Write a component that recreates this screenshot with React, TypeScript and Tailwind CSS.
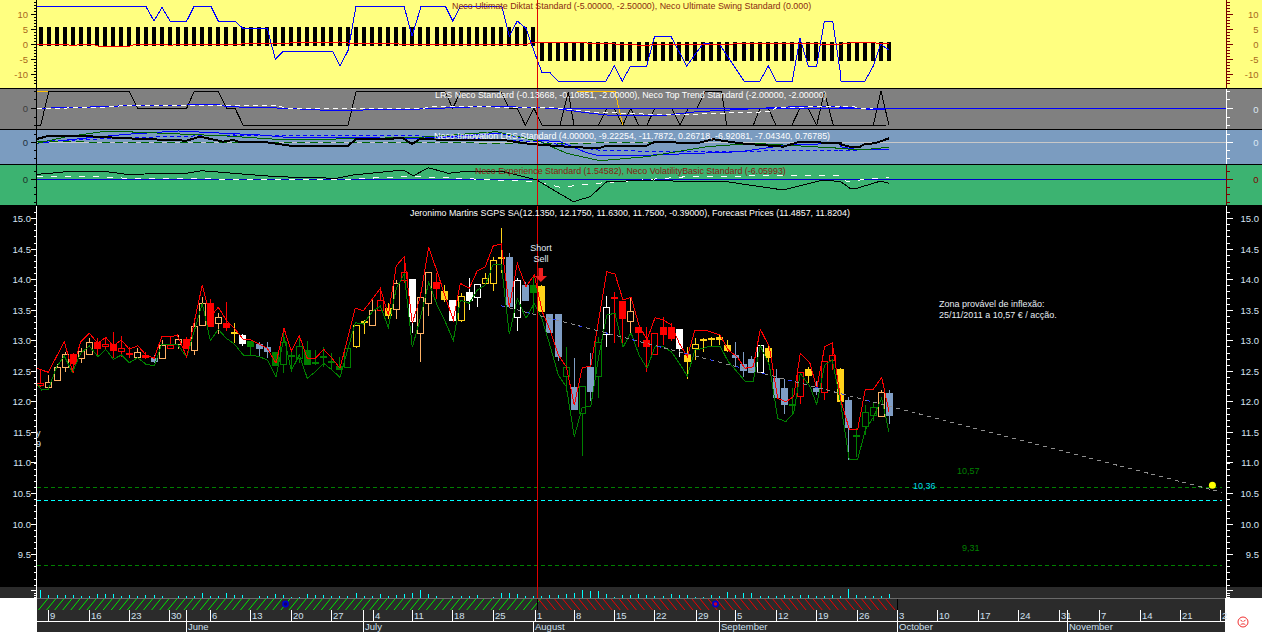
import React from "react";

const SP = 8.08;
const X0 = 40.4;
const cx = (i: number) => X0 + SP * i;

type C = [string, string, number, number, number, number];
const COL: Record<string, string> = { r: "#ff0000", o: "#ffb266", y: "#ffd21a", w: "#ffffff", g: "#008000", b: "#7f9dc4" };

// kind: upper-case letter = filled; lower = hollow. body and wick given in screen y
const raw4: [string, number, number, number, number][] = [
  ["r", 490, 497, 450, 500], ["o", 487, 503, 465, 510], ["o", 442, 482, 432, 482], ["o", 403, 442, 395, 455],
  ["R", 403, 431, 400, 458], ["o", 394, 416, 385, 428], ["o", 367, 404, 355, 404], ["R", 366, 386, 355, 405],
  ["r", 373, 380, 352, 390], ["R", 372, 393, 336, 415], ["r", 385, 394, 348, 412], ["r", 403, 404, 382, 414],
  ["o", 397, 412, 385, 412], ["R", 405, 413, 396, 416], ["B", 415, 426, 405, 428], ["o", 375, 416, 360, 416],
  ["r", 375, 386, 352, 386], ["o", 358, 374, 345, 388], ["R", 358, 386, 350, 388], ["o", 320, 392, 305, 405],
  ["o", 250, 317, 232, 317], ["R", 250, 321, 238, 321], ["o", 292, 310, 280, 342], ["R", 310, 323, 247, 332],
  ["y", 340, 341, 310, 368], ["W", 345, 372, 342, 378], ["G", 363, 380, 363, 405], ["B", 372, 387, 365, 410],
  ["B", 382, 396, 367, 415], ["G", 397, 437, 397, 437],
];
const raw5: [string, number, number, number, number][] = [
  ["g", 366, 433, 325, 460], ["g", 407, 410, 390, 455], ["g", 380, 415, 350, 430], ["G", 390, 435, 363, 435],
  ["g", 428, 429, 390, 435], ["g", 411, 412, 380, 440], ["g", 425, 426, 400, 448], ["G", 438, 450, 410, 450],
  ["g", 385, 443, 385, 443], ["y", 316, 380, 316, 383], ["y", 307, 308, 300, 342], ["o", 272, 316, 238, 316],
  ["r", 241, 270, 205, 270], ["Y", 265, 288, 250, 296], ["o", 190, 268, 180, 296], ["r", 157, 180, 110, 190],
  ["W", 177, 305, 177, 338], ["o", 232, 340, 232, 425], ["o", 157, 250, 157, 288], ["R", 187, 207, 160, 238],
  ["Y", 213, 240, 195, 245], ["W", 240, 303, 240, 303], ["y", 230, 300, 220, 305], ["W", 216, 243, 175, 270],
  ["w", 193, 233, 193, 260], ["y", 175, 191, 160, 191], ["y", 121, 190, 112, 212], ["y", 114, 115, 25, 160],
  ["B", 111, 260, 100, 260], ["w", 180, 293, 175, 332], ["B", 195, 243, 185, 243], ["G", 195, 219, 165, 280],
];
const raw6: [string, number, number, number, number][] = [
  ["Y", 138, 215, 135, 215], ["B", 222, 278, 222, 278], ["B", 222, 350, 222, 362], ["g", 382, 408, 322, 455],
  ["B", 440, 510, 355, 510], ["g", 438, 520, 438, 648], ["B", 382, 455, 340, 482], ["g", 307, 408, 290, 473],
  ["w", 203, 284, 168, 320], ["r", 175, 176, 155, 310], ["R", 184, 238, 184, 310], ["o", 213, 245, 170, 280],
  ["R", 262, 278, 262, 322], ["R", 300, 320, 260, 395], ["r", 280, 344, 280, 344], ["R", 262, 285, 232, 315],
  ["R", 262, 296, 250, 303], ["W", 267, 326, 267, 350], ["Y", 345, 365, 320, 418], ["y", 313, 326, 295, 360],
  ["y", 301, 305, 295, 335],
];
const raw7: [string, number, number, number, number][] = [
  ["y", 118, 122, 112, 138], ["Y", 110, 120, 105, 135], ["Y", 135, 152, 120, 155], ["B", 165, 173, 125, 200],
  ["B", 192, 212, 157, 230], ["B", 178, 218, 168, 218], ["w", 135, 218, 135, 218], ["Y", 145, 173, 135, 190],
  ["B", 233, 295, 208, 295], ["B", 265, 315, 238, 342], ["g", 314, 315, 265, 345], ["r", 218, 290, 218, 312],
  ["Y", 207, 228, 200, 250], ["B", 263, 275, 243, 285], ["r", 185, 277, 185, 300], ["r", 167, 180, 130, 210],
  ["Y", 207, 305, 205, 305], ["B", 300, 385, 290, 480], ["g", 408, 409, 385, 470], ["g", 338, 380, 315, 405],
  ["g", 322, 347, 305, 362], ["o", 278, 350, 270, 350], ["B", 280, 347, 270, 372],
];
const candles: C[] = [
  ...raw4.map((r) => [r[0], "", 220 + r[1] / 3, 220 + r[2] / 3, 220 + r[3] / 3, 220 + r[4] / 3] as C),
  ...raw5.map((r) => [r[0], "", 220 + r[1] / 3, 220 + r[2] / 3, 220 + r[3] / 3, 220 + r[4] / 3] as C),
  ...raw6.map((r) => [r[0], "", 240 + r[1] / 3, 240 + r[2] / 3, 240 + r[3] / 3, 240 + r[4] / 3] as C),
  ...raw7.map((r) => [r[0], "", 300 + r[1] / 3, 300 + r[2] / 3, 300 + r[3] / 3, 300 + r[4] / 3] as C),
];

const P = (ox: number, oy: number, s: string) =>
  s
    .trim()
    .split(/\s+/)
    .map((p) => {
      const [a, b] = p.split(",").map(Number);
      return `${(ox + a / 3).toFixed(1)},${(oy + b / 3).toFixed(1)}`;
    })
    .join(" ");

const redBand = [
  P(30, 220, "20,445 55,457 103,365 127,452 152,365 178,340 204,370 227,352 250,378 274,360 298,388 323,377 348,405 373,415 395,350 425,350 442,345 470,410 517,195 541,290 565,262 589,300 613,325 640,358 664,360 688,372 712,385 738,430 762,325"),
  P(280, 220, "34,393 58,347 82,415 106,415 131,388 156,415 180,445 226,265 250,272 277,238 301,205 325,285 349,137 373,110 397,310 421,230 446,82 473,160 496,230 520,300 541,190 568,205 592,152 616,140 640,77 664,72 688,262 712,130 738,200 763,165"),
  P(530, 240, "37,215 61,272 85,345 109,380 133,495 157,382 182,380 206,240 230,95 255,102 279,180 303,172 327,255 351,300 375,233 400,240 424,255 448,310 472,350 495,270 520,270 544,275"),
  P(710, 300, "0,95 30,105 55,150 81,170 105,205 130,200 151,88 178,140 203,295 227,305 251,290 271,160 300,190 320,265 344,140 367,128 392,300 418,388 443,388 466,268 490,268 515,232 537,335"),
].join(" ");
const greenBand = [
  P(30, 220, "20,490 35,510 55,508 80,440 103,408 127,457 152,400 178,378 204,410 227,388 250,418 274,405 298,428 323,413 348,433 373,437 395,372 442,372 470,412 517,250 541,362 565,328 589,355 613,372 640,405 664,405 688,410 712,420 738,470 762,350"),
  P(280, 220, "34,452 58,405 82,475 106,455 131,430 156,450 180,472 226,308 250,312 277,275 301,258 325,322 349,205 373,162 397,382 421,295 446,187 473,260 496,305 520,362 541,240 568,250 592,210 616,195 640,132 664,132 688,343 712,235 738,295 763,250"),
  P(530, 240, "37,240 61,320 85,405 109,440 133,590 157,502 182,500 206,350 230,225 255,220 279,322 303,278 327,345 351,385 375,320 400,320 424,335 448,370 472,408 495,330 520,325"),
  P(710, 300, "0,138 30,138 55,185 81,215 105,243 130,243 151,138 178,195 203,355 227,365 251,340 271,220 300,260 320,313 344,195 367,180 392,310 418,480 443,478 466,390 490,352 515,295 537,397"),
].join(" ");

const vols = [
  8, 3, 3, 3, 3, 2, 2, 4, 4, 4, 2, 3, 2, 3, 3, 2, 0, 2, 2, 2, 5, 2, 2, 5, 3, 3, 0, 2, 2, 4, 3, 1, 1, 4, 3, 3, 2, 2, 2, 5, 2, 2, 4, 2, 3, 4, 5,
  8, 4, 2, 0, 2, 2, 2, 3, 0, 1, 5, 5, 4, 2, 2, 2, 3, 3, 4, 5, 8, 7, 7, 4, 1, 3, 3, 4, 3, 2, 2, 4, 3, 3, 1, 1, 3, 2, 6, 3, 5, 5, 2, 2, 2, 3, 2, 3, 3, 2, 2, 3,
  2, 9, 3, 2, 2, 2, 4,
];

const FONT = "font-['Liberation_Sans',Arial,sans-serif]";

function Candle({ c, i }: { c: C; i: number }) {
  const k = c[0];
  const col = COL[k.toLowerCase()];
  const filled = k === k.toUpperCase();
  const x = Math.round(cx(i)) + 0.5;
  const h = Math.max(c[3] - c[2], 0.5);
  const cross = !filled && h < 2;
  return (
    <g>
      <line x1={x} x2={x} y1={c[4]} y2={c[5]} stroke={col} strokeWidth={1} shapeRendering="crispEdges" />
      {cross ? (
        <line x1={x - 3.5} x2={x + 3.5} y1={c[2]} y2={c[2]} stroke={col} strokeWidth={2} shapeRendering="crispEdges" />
      ) : filled ? (
        <rect x={x - 3.5} y={c[2]} width={7} height={h} fill={col} shapeRendering="crispEdges" />
      ) : (
        <rect x={x - 3} y={c[2]} width={6} height={h} fill="#000" stroke={col} strokeWidth={1} shapeRendering="crispEdges" />
      )}
    </g>
  );
}

function Ticks({ side, color, major, minor }: { side: "l" | "r"; color: string; major: number[]; minor: number[] }) {
  const ax = side === "l" ? 36.5 : 0.5;
  const dir = side === "l" ? -1 : 1;
  return (
    <g stroke={color} strokeWidth={1} shapeRendering="crispEdges">
      {minor.map((y) => (
        <line key={y} x1={ax} x2={ax + dir * 3} y1={y} y2={y} />
      ))}
      {major.map((y) => (
        <line key={y} x1={ax} x2={ax + dir * 6} y1={y} y2={y} />
      ))}
    </g>
  );
}

type Lab = { y: number; t: string };

function Axis({
  side, w, y0, h, color, major, minor, labels, textColor, labelX,
}: {
  side: "l" | "r"; w: number; y0: number; h: number; color: string; major: number[]; minor: number[]; labels: Lab[]; textColor: string; labelX: number;
}) {
  const ax = side === "l" ? 36.5 : 0.5;
  return (
    <svg className="shrink-0" width={w} height={h} viewBox={`0 ${y0} ${w} ${h}`}>
      <line x1={ax} x2={ax} y1={y0} y2={y0 + h} stroke={color} shapeRendering="crispEdges" />
      <Ticks side={side} color={color} major={major} minor={minor} />
      {labels.map((l) => (
        <text key={l.t} x={labelX} y={l.y + 3.5} fill={textColor} fontSize={9.5} textAnchor="end" fontFamily="'Liberation Sans',Arial,sans-serif">
          {l.t}
        </text>
      ))}
    </svg>
  );
}

function Plot({ y0, h, children }: { y0: number; h: number; children: React.ReactNode }) {
  return (
    <svg className="block" width={1189} height={h} viewBox={`37 ${y0} 1189 ${h}`} shapeRendering="crispEdges">
      {children}
    </svg>
  );
}

function Title({ children, color, left, top }: { children: React.ReactNode; color: string; left: string; top: string }) {
  return (
    <span className={`absolute whitespace-nowrap text-[8.9px] leading-[13px] ${color} ${left} ${top}`}>{children}</span>
  );
}

const range = (a: number, b: number, s: number) => {
  const o: number[] = [];
  for (let v = a; v <= b; v += s) o.push(v);
  return o;
};

const RED_V = <line x1={537.5} x2={537.5} y1={0} y2={640} stroke="#e00000" strokeWidth={1} shapeRendering="crispEdges" />;

const ymajor = [14.5, 29.5, 44.5, 59.5, 74.5];
const yminor = range(2.5, 86, 3);
const ylabels: Lab[] = [
  { y: 14.5, t: "10" }, { y: 29.5, t: "5" }, { y: 44.5, t: "0" }, { y: 59.5, t: "-5" }, { y: 74.5, t: "-10" },
];
const mainMajor = [15, 14.5, 14, 13.5, 13, 12.5, 12, 11.5, 11, 10.5, 10, 9.5].map((v) => Math.round(218 + (15 - v) * 61.1) + 0.5);
const mainMinor = range(0, 64, 1).map((n) => Math.round(212 + n * 6.11) + 0.5);
const mainLabels: Lab[] = [15, 14.5, 14, 13.5, 13, 12.5, 12, 11.5, 11, 10.5, 10, 9.5].map((v) => ({
  y: Math.round(218 + (15 - v) * 61.1),
  t: v.toFixed(1),
}));

const dates: [number, string][] = [
  [48, "9"], [89, "16"], [129, "23"], [169, "30"], [210, "6"], [250, "13"], [291, "20"], [331, "27"], [373, "4"], [412, "11"], [452, "18"], [493, "25"],
  [535, "1"], [574, "8"], [614, "15"], [654, "22"], [696, "29"], [735, "5"], [776, "12"], [816, "19"], [857, "26"], [897, "3"], [937, "10"], [978, "17"],
  [1018, "24"], [1059, "31"], [1099, "7"], [1140, "14"], [1180, "21"], [1220, "2"],
];
const months: [number, string][] = [
  [186, "June"], [363, "July"], [533, "August"], [719, "September"], [897, "October"], [1067, "November"],
];

function Indicator({ y0, h, bg, axL, axR, plot, title }: {
  y0: number; h: number; bg: string;
  axL: { major: number[]; minor: number[]; labels: Lab[]; text: string };
  axR: { color: string; major: number[]; minor: number[]; labels: Lab[]; text: string };
  plot: React.ReactNode; title: React.ReactNode;
}) {
  return (
    <div className={`flex ${bg} border-b border-black`} style={{ height: h + 1 }}>
      <Axis side="l" w={37} y0={y0} h={h} color="#000" major={axL.major} minor={axL.minor} labels={axL.labels} textColor={axL.text} labelX={28} />
      <div className="relative w-[1189px]">
        <Plot y0={y0} h={h}>{plot}</Plot>
        {title}
      </div>
      <Axis side="r" w={36} y0={y0} h={h} color={axR.color} major={axR.major} minor={axR.minor} labels={axR.labels} textColor={axR.text} labelX={32.5} />
    </div>
  );
}

export default function App() {
  const lineBase = { fill: "none", strokeLinejoin: "miter" as const };
  return (
    <div className={`flex h-[632px] w-[1262px] flex-col overflow-hidden bg-black ${FONT}`}>
      <Indicator
        y0={0} h={88} bg="bg-[#ffff80]"
        axL={{ major: ymajor, minor: yminor, labels: ylabels, text: "#a8681c" }}
        axR={{ color: "#7a0000", major: ymajor, minor: yminor, labels: ylabels, text: "#a8681c" }}
        title={<Title color="text-[#8a2a10]" left="left-[415px]" top="top-0">Neco Ultimate Diktat Standard (-5.00000, -2.50000), Neco Ultimate Swing Standard (0.000)</Title>}
        plot={
          <>
            {range(0, 105, 1).map((i) => (
              <rect key={i} x={Math.round(cx(i) - 1.8)} y={i <= 61 ? 27 : 42} width={4} height={19} fill="#000" />
            ))}
            <polyline {...lineBase} stroke="#0000ff" points={[
              P(0, 0, "110,18 437,18 462,63 486,22 510,63 560,63 583,18 632,18 655,63 705,63 728,85 802,85 826,178 850,154 998,154 1020,198 1045,150 1068,18 1212,18 1236,108 1260,30"),
              P(420, 0, "0,18 76,18 98,63 122,18 245,18 268,108 292,63 318,85 342,153 366,218 390,218 414,243 558,243 583,198 607,243 632,198 680,198 704,108 752,108 800,198 850,130 900,135 972,243 1020,243 1045,198 1068,243 1117,243 1140,115 1165,198 1190,198 1213,63 1238,63 1262,225"),
              P(840, 0, "3,243 75,243 100,198 122,133 147,150"),
            ].join(" ")} />
            <polyline {...lineBase} stroke="#ff0000" points={[
              P(0, 0, "110,133 200,133 218,138 240,133 280,133 295,138 390,138 405,133 500,133 510,138 525,133 720,133 735,130 820,130 920,128 1020,126 1050,130 1260,133"),
              P(420, 0, "320,133 340,127 570,130 590,133 650,135 690,135 700,133 780,135 860,133 1130,130 1230,133 1260,133"),
              P(840, 0, "0,133 55,126 75,126 95,128 147,132"),
            ].join(" ")} />
            {RED_V}
          </>
        }
      />
      <Indicator
        y0={89} h={40} bg="bg-[#808080]"
        axL={{ major: [108.5], minor: [91.5, 99.5, 117.5, 125.5], labels: [{ y: 108.5, t: "0" }], text: "#3c3c3c" }}
        axR={{ color: "#fff", major: [108.5], minor: [91.5, 99.5, 117.5, 125.5], labels: [{ y: 109.5, t: "0" }], text: "#dce8f4" }}
        title={<Title color="text-white" left="left-[398px]" top="top-0">LRS Neco Standard (-0.13668, -0.10851, -2.00000), Neco Top Trend Standard (-2.00000, -2.00000)</Title>}
        plot={
          <>
            <line x1={554} x2={886} y1={125.5} y2={125.5} stroke="#000" />
            <polyline {...lineBase} stroke="#000" points={[
              P(0, 0, "110,376 122,376 146,275 388,275 413,325 560,325 582,275 655,275 680,325 705,325 730,376 1044,376 1068,275 1260,275"),
              P(420, 0, "75,275 98,325 122,275 243,275 268,325 292,325 316,376 342,325 366,376 420,376 445,275 462,376 535,376 560,325 583,325 608,376 632,325 656,376 680,376 705,325 755,325 780,376 805,325 830,325 855,275 905,275 920,376 1000,376 1020,325 1045,325 1068,376 1115,376 1140,325 1165,325 1190,376 1213,275 1240,376"),
              P(840, 0, "0,376 100,376 123,273 147,376"),
            ].join(" ")} />
            <polyline {...lineBase} stroke="#ffbf00" points={P(0, 0, "110,274 144,274")} />
            <polyline {...lineBase} stroke="#ffbf00" points={P(420, 0, "470,274 585,274 608,376")} />
            <line x1={553} x2={1226} y1={108.5} y2={108.5} stroke="#0000ff" strokeWidth={1} />
            <polyline {...lineBase} stroke="#0000ff" points={[
              P(0, 0, "110,325 200,323 300,320 380,317 560,315 650,313 680,320 800,323 860,325 960,330 1090,330 1100,327 1260,327"),
              P(420, 0, "175,320 260,320 400,325 500,338 560,345 740,345 830,335 930,330 1020,325 1170,318 1262,318"),
              P(840, 0, "0,322 60,325 100,330 147,326"),
            ].join(" ")} />
            <polyline {...lineBase} stroke="#fff" strokeDasharray="5 4" points={[
              P(0, 0, "110,325 300,323 380,316 650,316 830,317 860,325 1260,327"),
              P(420, 0, "35,320 390,322 500,335 740,345 900,340 1050,335 1070,322 1262,320"),
              P(840, 0, "0,320 40,320 60,325 100,327"),
            ].join(" ")} />
            {RED_V}
          </>
        }
      />
      <Indicator
        y0={130} h={34} bg="bg-[#7b9cc0]"
        axL={{ major: [142.5], minor: [134.5, 150.5, 158.5], labels: [{ y: 142.5, t: "0" }], text: "#20303c" }}
        axR={{ color: "#fff", major: [142.5], minor: [134.5, 150.5, 158.5], labels: [{ y: 142.5, t: "0" }], text: "#dce8f4" }}
        title={<Title color="text-white" left="left-[397px]" top="top-0">Neco Innovation LRS Standard (4.00000, -9.22254, -11.7872, 0.26718, -6.92081, -7.04340, 0.76785)</Title>}
        plot={
          <>
            <line x1={37} x2={1226} y1={142.5} y2={142.5} stroke="#c8c8c8" />
            <polyline {...lineBase} stroke="#0000ff" strokeDasharray="4 3" points={[
              P(0, 0, "110,425 380,413 700,405 1260,408"),
              P(420, 0, "360,425 550,452 860,455 1262,450"),
              P(840, 0, "0,452 147,447"),
            ].join(" ")} />
            <polyline {...lineBase} stroke="#0000ff" points={[
              P(0, 0, "110,430 250,415 380,403 535,393 780,405 860,412 1260,415"),
              P(420, 0, "240,400 340,420 420,425 500,458 540,468 700,465 960,455 1100,435 1262,430"),
              P(840, 0, "0,440 60,450 147,447"),
            ].join(" ")} />
            <polyline {...lineBase} stroke="#006400" points={[
              P(0, 0, "110,430 200,410 320,393 450,398 680,408 860,420 1260,412"),
              P(420, 0, "230,395 360,425 440,460 540,482 680,470 860,440 1000,430 1262,445"),
              P(840, 0, "0,445 60,450 147,442"),
            ].join(" ")} />
            <polyline {...lineBase} stroke="#006400" strokeDasharray="8 5" points={[
              P(0, 0, "110,425 400,427 1260,428"),
              P(420, 0, "340,430 700,428"),
            ].join(" ")} />
            <polyline {...lineBase} stroke="#000" strokeWidth={2} points={[
              P(0, 0, "110,417 145,408 250,408 380,415 560,422 600,410 670,425 700,420 720,427 800,427 870,437 1044,437 1068,418 1210,415 1236,432 1260,417"),
              P(420, 0, "95,420 250,420 330,432 440,440 535,445 560,437 680,437 705,425 830,430 880,418 960,430 1090,440 1140,425 1262,430"),
              P(840, 0, "0,433 30,440 60,440 75,432 105,430 147,415"),
            ].join(" ")} />
            {RED_V}
          </>
        }
      />
      <Indicator
        y0={165} h={40} bg="bg-[#3cb371]"
        axL={{ major: [179.5], minor: [171.5, 187.5, 194.5, 202.5], labels: [{ y: 179.5, t: "0" }], text: "#1c3028" }}
        axR={{ color: "#7a0000", major: [179.5], minor: [171.5, 187.5, 194.5, 202.5], labels: [{ y: 179.5, t: "0" }], text: "#800000" }}
        title={<Title color="text-[#8a1a10]" left="left-[438px]" top="top-0">Neco Experience Standard (1.54582), Neco VolatilityBasic Standard (-6.05993)</Title>}
        plot={
          <>
            <line x1={37} x2={1226} y1={179.5} y2={179.5} stroke="#0000c8" />
            <polyline {...lineBase} stroke="#fff" strokeDasharray="6 8" points={[
              P(0, 0, "110,528 270,528 380,535 1000,540 1200,530 1260,530"),
              P(420, 0, "350,545 420,562 530,550 800,530 1262,525"),
              P(840, 0, "20,545 100,535 147,532"),
            ].join(" ")} />
            <polyline {...lineBase} stroke="#000" points={[
              P(0, 0, "110,523 150,520 200,515 320,515 380,523 560,520 605,512 700,520 830,530 1010,535 1060,525 1210,510 1240,527 1260,517"),
              P(420, 0, "25,503 85,520 130,515 250,515 350,540 460,605 510,590 560,545 700,540 800,545 920,545 1090,570 1210,540 1262,545"),
              P(840, 0, "30,565 50,565 100,550 122,543 147,550"),
            ].join(" ")} />
            {RED_V}
          </>
        }
      />
      <div className="h-[1px] bg-white" />
      {/* Main price chart */}
      <div className="flex h-[381px] bg-black">
        <Axis side="l" w={37} y0={206} h={381} color="#fff" major={mainMajor} minor={mainMinor} labels={mainLabels} textColor="#d4e4f4" labelX={31} />
        <div className="relative w-[1189px]">
          <Plot y0={206} h={381}>
            <line x1={37} x2={1222} y1={487.5} y2={487.5} stroke="#008000" strokeDasharray="4 3" />
            <line x1={37} x2={1222} y1={500.5} y2={500.5} stroke="#00ffff" strokeDasharray="4 3" />
            <line x1={37} x2={1222} y1={565.5} y2={565.5} stroke="#008000" strokeDasharray="4 3" />
            {candles.map((c, i) => (
              <Candle key={i} c={c} i={i} />
            ))}
            <polyline fill="none" stroke="#008000" points={greenBand} />
            <polyline fill="none" stroke="#ff0000" points={redBand} />
            <line x1={501} x2={1222} y1={305.7} y2={492.3} stroke="#8e8e8e" strokeDasharray="4 4" />
            <line x1={501} x2={893} y1={305.7} y2={407.2} stroke="#2a3cff" strokeDasharray="3 24" />
            <circle cx={1212.4} cy={485.3} r={3.5} fill="#ffff00" shapeRendering="auto" />
            {RED_V}
            <path d="M538.5 268h4.5v8h4l-6.2 6-6.2-6h3.9z" fill="#f02020" shapeRendering="auto" />
          </Plot>
          <Title color="text-white" left="left-[373px]" top="top-[1px]">Jeronimo Martins SGPS SA(12.1350, 12.1750, 11.6300, 11.7500, -0.39000), Forecast Prices (11.4857, 11.8204)</Title>
          <span className="absolute left-[492px] top-[37px] w-[24px] text-center text-[9px] leading-[11px] text-[#e0ecf8]">Short<br />Sell</span>
          <span className="absolute left-[902px] top-[93px] whitespace-pre text-[9px] leading-[11px] text-[#e8eef4]">{"Zona provável de inflexão:\n25/11/2011 a 10,57 € / acção."}</span>
          <span className="absolute left-[920px] top-[259px] text-[9px] leading-[13px] text-[#008000]">10,57</span>
          <span className="absolute left-[876px] top-[274px] text-[9px] leading-[13px] text-[#00d8e8]">10,36</span>
          <span className="absolute left-[925px] top-[336px] text-[9px] leading-[13px] text-[#008000]">9,31</span>
          <span className="absolute left-[-1px] top-[222px] text-[9px] leading-[11px] text-[#d4e4f4]">y<br />9</span>
        </div>
        <Axis side="r" w={36} y0={206} h={381} color="#fff" major={mainMajor} minor={mainMinor} labels={mainLabels} textColor="#d4e4f4" labelX={33} />
      </div>
      {/* Volume strip */}
      <div className="flex h-[11px] bg-[#2b2b2b]">
        <Axis side="l" w={37} y0={587} h={11} color="#fff" major={[590.5]} minor={[593.5, 595.5, 597.5]} labels={[]} textColor="#fff" labelX={30} />
        <svg className="block" width={1189} height={11} viewBox="37 587 1189 11">
          {vols.map((v, i) => (
            <line key={i} x1={Math.round(cx(i)) + 0.5} x2={Math.round(cx(i)) + 0.5} y1={598} y2={598 - v} stroke="#00ffff" shapeRendering="crispEdges" />
          ))}
          <line x1={537.5} x2={537.5} y1={587} y2={598} stroke="#e00000" shapeRendering="crispEdges" />
        </svg>
        <Axis side="r" w={36} y0={587} h={11} color="#fff" major={[590.5]} minor={[593.5, 595.5, 597.5]} labels={[]} textColor="#fff" labelX={30} />
      </div>
      {/* Bottom: hatch + calendar */}
      <div className="flex h-[34px]">
        <div className="w-[37px] bg-white" />
        <div className="flex w-[1188px] flex-col bg-[#2b2b2b]">
          <svg className="block" width={1188} height={12} viewBox="37 598 1188 12">
            {range(0, 61, 1).map((i) => (
              <line key={i} x1={38.5 + i * SP} y1={610} x2={47.5 + i * SP} y2={599} stroke="#00e800" strokeWidth={1} />
            ))}
            {range(0, 43, 1).map((i) => (
              <line key={i} x1={538.5 + i * SP} y1={599} x2={547.5 + i * SP} y2={610} stroke="#f00000" strokeWidth={1} />
            ))}
            <rect x={897} y={598} width={12} height={12} fill="#2b2b2b" />
            <line x1={37} x2={1225} y1={598.5} y2={598.5} stroke="#6a6a6a" shapeRendering="crispEdges" />
            <line x1={537.5} x2={537.5} y1={599} y2={610} stroke="#000" shapeRendering="crispEdges" />
            <line x1={897.5} x2={897.5} y1={599} y2={610} stroke="#000" shapeRendering="crispEdges" />
            <circle cx={285.5} cy={604} r={2.6} fill="#100070" stroke="#0000d0" strokeWidth={1.6} />
            <circle cx={715.5} cy={604} r={2.6} fill="#c00030" stroke="#0000d0" strokeWidth={1.6} />
          </svg>
          <div className="relative z-10 h-[11px]">
            {dates.map(([x, t]) => (
              <span key={x} className="absolute top-0 h-[11px] border-l border-white pl-[1px] text-[9.5px] leading-[11px] text-[#cfe0f0]" style={{ left: x - 37 }}>
                {t}
              </span>
            ))}
            {months.filter(([x]) => x !== 533).map(([x]) => (
              <span key={x} className="absolute top-0 h-[11px] border-l border-white" style={{ left: x - 37 }} />
            ))}
          </div>
          <div className="h-[1px] bg-white" />
          <div className="relative h-[10px] overflow-hidden">
            {months.map(([x, t]) => (
              <span key={x} className="absolute top-0 h-[10px] border-l border-white pl-[1px] text-[9.5px] leading-[10px] text-[#cfe0f0]" style={{ left: x - 37 }}>
                {t}
              </span>
            ))}
          </div>
        </div>
        <div className="flex w-[37px] items-end justify-center bg-white pb-[4px] pr-[1px]">
          <svg width={12} height={12} viewBox="0 0 12 12" fill="none" stroke="#f03030">
            <circle cx={6} cy={6} r={5} />
            <path d="M3.5 4.2l2 1.2M8.5 4.2l-2 1.2M3.5 9c1.2-1.6 3.8-1.6 5 0" />
          </svg>
        </div>
      </div>
    </div>
  );
}
